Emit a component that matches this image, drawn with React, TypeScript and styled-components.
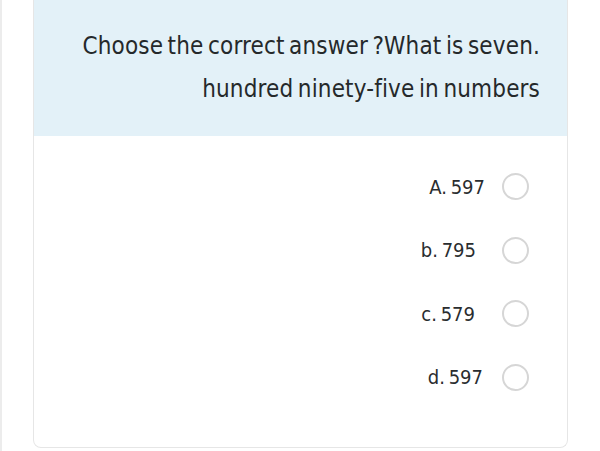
import React from 'react';
import styled, {createGlobalStyle} from 'styled-components';

const GlobalStyle = createGlobalStyle`
  html, body {
    margin: 0;
    padding: 0;
    background: #ffffff;
  }
  body {
    font-family: "DejaVu Sans Condensed", "DejaVu Sans", sans-serif;
    color: #2a2d2f;
  }
`

type OptionType = {
    label: string,
    shift: number,
}

const options: OptionType[] = [
    {label: 'A. 597', shift: 0},
    {label: 'b. 795', shift: 9},
    {label: 'c. 579', shift: 10},
    {label: 'd. 597', shift: 2},
]

const App = () => {
    return (
        <Page>
            <GlobalStyle/>
            <Card>
                <QuestionHeader>
                    <QuestionLine>Choose the correct answer ?What is seven.</QuestionLine>
                    <QuestionLine>hundred ninety-five in numbers</QuestionLine>
                </QuestionHeader>
                <OptionList>
                    {options.map(o => (
                        <OptionRow key={o.label}>
                            <OptionLabel shift={o.shift}>{o.label}</OptionLabel>
                            <Radio/>
                        </OptionRow>
                    ))}
                </OptionList>
            </Card>
        </Page>
    );
};

export default App;

const Page = styled.div`
  height: 451px;
  border-left: 2px solid #ececec;
  padding-left: 31px;
  box-sizing: border-box;
  overflow: hidden;
`

const Card = styled.div`
  width: 535px;
  height: 448px;
  box-sizing: border-box;
  border: 1px solid #e6e6e6;
  border-top: none;
  border-radius: 0 0 8px 8px;
  background: #ffffff;
  overflow: hidden;
`

const QuestionHeader = styled.div`
  height: 136px;
  box-sizing: border-box;
  background: #e3f1f8;
  padding: 25px 27px 0 20px;
  display: flex;
  flex-direction: column;
  align-items: flex-end;
`

const QuestionLine = styled.p`
  margin: 0;
  font-size: 24px;
  line-height: 43px;
  letter-spacing: 0.15px;
  word-spacing: -2.5px;
  white-space: nowrap;
  color: #25292b;
`

const OptionList = styled.div`
  padding: 19px 38px 0 0;
  display: flex;
  flex-direction: column;
`

const OptionRow = styled.div`
  height: 63.5px;
  display: flex;
  align-items: center;
  justify-content: flex-end;
`

const OptionLabel = styled.span<{ shift: number }>`
  font-size: 20px;
  word-spacing: -2px;
  color: #2a2d2f;
  margin-right: ${props => 17 + props.shift}px;
`

const Radio = styled.span`
  width: 23px;
  height: 23px;
  border: 2px solid #d6d6d6;
  border-radius: 50%;
  background: #ffffff;
`
